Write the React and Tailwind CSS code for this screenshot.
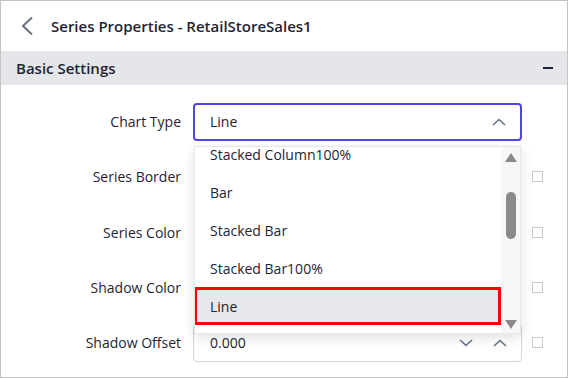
const FONT = { fontFamily: '"Open Sans", "Noto Sans", sans-serif' };

const OPTIONS = ["Stacked Column100%", "Bar", "Stacked Bar", "Stacked Bar100%", "Line", "Area"];

function Chevron({ up = false, className = "" }) {
  return (
    <svg width="14" height="8" viewBox="0 0 14 8" className={className}>
      <polyline
        points={up ? "1,7 7,1.5 13,7" : "1,1 7,6.5 13,1"}
        fill="none"
        stroke="#64748b"
        strokeWidth="1.6"
      />
    </svg>
  );
}

function Check() {
  return <span className="w-[11px] h-[11px] border border-[#c8c8cc] bg-white shrink-0" />;
}

function Row({ label, children, check = true }) {
  return (
    <div className="h-[55.25px] flex items-center">
      <span className="w-[180px] text-right text-[14px] text-[#1e2433] shrink-0">{label}</span>
      <div className="ml-[12px] w-[329px] relative">{children}</div>
      {check && <div className="ml-[10px] flex"><Check /></div>}
    </div>
  );
}

function Dropdown() {
  return (
    <div className="absolute left-[1px] right-[1px] top-[43px] h-[188px] bg-white border border-[#e5e7eb] shadow-[0_4px_12px_rgba(0,0,0,0.12)] z-10 flex overflow-hidden">
      <div className="flex-1 overflow-hidden">
        <div className="-mt-[11.5px]">
          {OPTIONS.map((o) =>
            o === "Line" ? (
              <div
                key={o}
                className="h-[38px] flex items-center pl-[13px] bg-[#e5e7eb] border-[3px] border-[#ff0000] -ml-px text-[14px] text-[#1e2433]"
              >
                {o}
              </div>
            ) : (
              <div key={o} className="h-[38px] flex items-center pl-[15px] text-[14px] text-[#1e2433]">
                {o}
              </div>
            )
          )}
        </div>
      </div>
      <div className="w-[19px] bg-[#f7f7f7] flex flex-col items-center pt-[6px] pb-[4px]">
        <svg width="12" height="9" viewBox="0 0 12 9">
          <polygon points="6,0 12,9 0,9" fill="#8a8a8a" />
        </svg>
        <div className="mt-[30px] w-[10px] h-[47px] rounded-full bg-[#8a8a8a]" />
        <div className="flex-1" />
        <svg width="12" height="9" viewBox="0 0 12 9">
          <polygon points="0,0 12,0 6,9" fill="#8a8a8a" />
        </svg>
      </div>
    </div>
  );
}

export default function App() {
  return (
    <div style={FONT} className="w-[568px] h-[378px] border border-[#c4c4c4] bg-white overflow-hidden">
      <div className="h-[50px] flex items-center pl-[19px]">
        <svg width="14" height="20" viewBox="0 0 14 20">
          <polyline points="12,1.5 3,10 12,18.5" fill="none" stroke="#6b7280" strokeWidth="2" />
        </svg>
        <span className="ml-[17px] text-[15px] font-semibold text-[#1e2433]">
          Series Properties - RetailStoreSales1
        </span>
      </div>
      <div className="h-[34px] bg-[#e5e6ea] flex items-center justify-between pl-[15px] pr-[14px]">
        <span className="text-[15px] font-semibold text-[#1e2433]">Basic Settings</span>
        <span className="w-[10px] h-[1.5px] bg-[#1e2433]" />
      </div>
      <div className="pt-[9px]">
        <Row label="Chart Type" check={false}>
          <div className="h-[38px] border-2 border-[#5046e5] rounded-[4px] flex items-center justify-between pl-[15px] pr-[14px] text-[14px] text-[#1e2433]">
            <span>Line</span>
            <Chevron up />
          </div>
          <Dropdown />
        </Row>
        <Row label="Series Border">
          <div className="h-[38px]" />
        </Row>
        <Row label="Series Color">
          <div className="h-[38px]" />
        </Row>
        <Row label="Shadow Color">
          <div className="h-[38px]" />
        </Row>
        <Row label="Shadow Offset">
          <div className="h-[38px] border border-[#d1d5db] rounded-[4px] flex items-center justify-between pl-[16px] pr-[14px] text-[14px] text-[#1e2433]">
            <span>0.000</span>
            <div className="flex items-center gap-[20px]">
              <Chevron />
              <Chevron up />
            </div>
          </div>
        </Row>
      </div>
    </div>
  );
}
